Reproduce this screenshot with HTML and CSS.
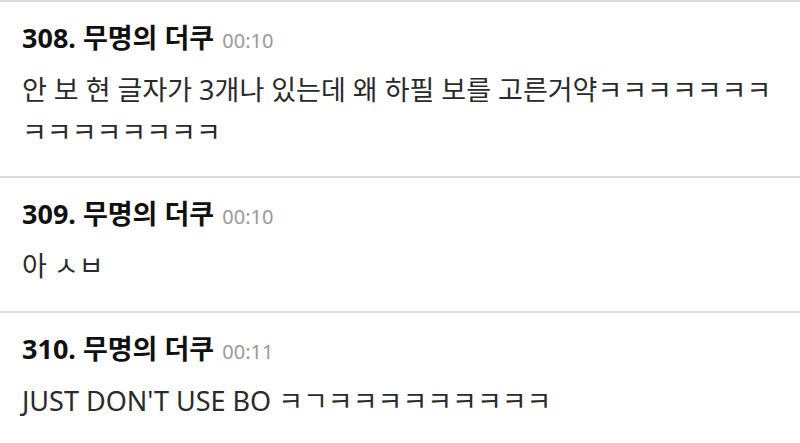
FILE: index.html
```html
<!DOCTYPE html>
<html lang="ko">
<head>
    <meta charset="UTF-8">
    <meta name="viewport" content="width=device-width, initial-scale=1.0">
    <title>댓글</title>
    <link rel="stylesheet" href="styles.css">
</head>
<body>
<div class="comment-list">

    <div class="comment">
        <div class="comment-head">
            <span class="comment-name">308. 무명의 더쿠</span>
            <span class="comment-time">00:10</span>
        </div>
        <p class="comment-text">안 보 현 글자가 3개나 있는데 왜 하필 보를 고른거약ㅋㅋㅋㅋㅋㅋㅋㅋㅋㅋㅋㅋㅋㅋㅋ</p>
    </div>

    <div class="comment">
        <div class="comment-head">
            <span class="comment-name">309. 무명의 더쿠</span>
            <span class="comment-time">00:10</span>
        </div>
        <p class="comment-text">아 ㅅㅂ</p>
    </div>

    <div class="comment">
        <div class="comment-head">
            <span class="comment-name">310. 무명의 더쿠</span>
            <span class="comment-time">00:11</span>
        </div>
        <p class="comment-text">JUST DON'T USE BO ㅋㄱㅋㅋㅋㅋㅋㅋㅋㅋㅋ</p>
    </div>

</div>
</body>
</html>
```

FILE: styles.css
```css
body {
    margin: 0;
    background-color: #ffffff;
    font-family: "Noto Sans", "Noto Sans CJK KR", sans-serif;
}

.comment {
    border-top: 2px solid #dcdcdc;
    padding: 17px 8px 24px 22px;
}

.comment-head {
    line-height: 38px;
    margin-bottom: 8px;
}

.comment-name {
    font-size: 27px;
    font-weight: bold;
    color: #111111;
}

.comment-time {
    font-size: 20px;
    line-height: 1;
    color: #9a9a9a;
    margin-left: 4px;
}

.comment-text {
    margin: 0;
    font-size: 27px;
    line-height: 41.7px;
    color: #2a2a2a;
}
```
